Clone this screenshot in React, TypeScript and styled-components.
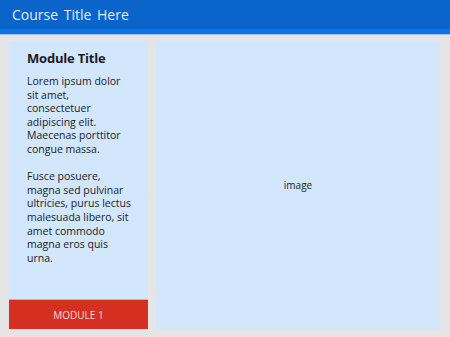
import React from 'react'
import styled, { createGlobalStyle } from 'styled-components'

const GlobalStyle = createGlobalStyle`
  html, body {
    margin: 0;
    padding: 0;
    background: #e6e4e4;
  }
  * {
    box-sizing: border-box;
  }
`

const Page = styled.div`
  width: 450px;
  height: 337px;
  display: flex;
  flex-direction: column;
  background: #e6e4e4;
  font-family: 'Open Sans', 'Noto Sans', sans-serif;
`

const Header = styled.header`
  height: 29px;
  background: #0b64c9;
  color: #e2ecf9;
  font-size: 14px;
  display: flex;
  align-items: center;
  padding-left: 12px;
  word-spacing: 2px;
`

const Stripe = styled.div`
  height: 6px;
  background: #0c74e7;
  border-bottom: 1px solid #a9c4e2;
`

const Body = styled.main`
  flex: 1;
  display: flex;
  gap: 8px;
  padding: 6px 10px 8px 9px;
`

const Panel = styled.section`
  background: #d2e6fc;
  display: flex;
  flex-direction: column;
`

const Sidebar = styled(Panel)`
  width: 139px;
`

const Content = styled.div`
  flex: 1;
  padding: 9px 14px 0 18px;
  color: #1b1b28;
`

const ModuleTitle = styled.h2`
  margin: 0 0 8px;
  font-size: 13px;
  font-weight: 700;
  line-height: 17px;
  letter-spacing: -0.2px;
`

const Para = styled.p`
  margin: 0 0 13.6px;
  font-size: 10.5px;
  line-height: 13.6px;
`

const ModuleButton = styled.div`
  height: 30px;
  background: #d42f21;
  color: #f6dcd8;
  font-size: 10px;
  display: flex;
  align-items: center;
  justify-content: center;
  border-top: 1px solid #e8a49c;
`

const ImagePanel = styled(Panel)`
  flex: 1;
  align-items: center;
  justify-content: center;
  font-size: 10px;
  color: #222;
`

export default function App() {
  return (
    <Page>
      <GlobalStyle />
      <Header>Course Title Here</Header>
      <Stripe />
      <Body>
        <Sidebar>
          <Content>
            <ModuleTitle>Module Title</ModuleTitle>
            <Para>
              Lorem ipsum dolor sit amet, consectetuer adipiscing elit.
              Maecenas porttitor congue massa.
            </Para>
            <Para>
              Fusce posuere, magna sed pulvinar ultricies, purus lectus
              malesuada libero, sit amet commodo magna eros quis urna.
            </Para>
          </Content>
          <ModuleButton>MODULE 1</ModuleButton>
        </Sidebar>
        <ImagePanel>image</ImagePanel>
      </Body>
    </Page>
  )
}
